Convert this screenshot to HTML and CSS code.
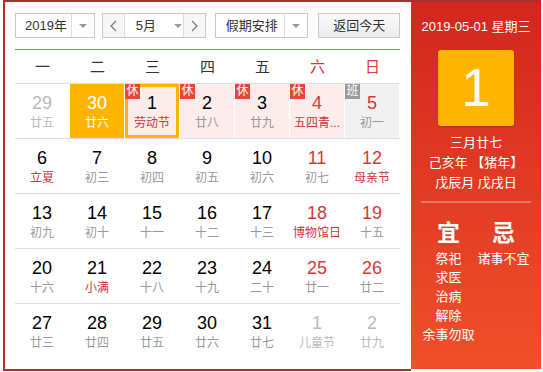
FILE: index.html
```html
<!DOCTYPE html>
<html lang="zh-CN">
<head>
  <meta charset="UTF-8" />
  <title>万年历</title>
  <link rel="stylesheet" href="styles.css">
</head>
<body>
  <div class="calendar">
    <div class="main">
      <!-- toolbar -->
      <div class="toolbar">
        <div class="select year-select">
          <span class="select-text">2019年</span>
          <span class="select-arrow"><i class="caret"></i></span>
        </div>
        <div class="month-group">
          <span class="nav-btn">
            <svg width="7" height="12" viewBox="0 0 7 12"><polyline points="6,1 1,6 6,11" fill="none" stroke="#777" stroke-width="1.2"/></svg>
          </span>
          <span class="month-select">5月<i class="caret"></i></span>
          <span class="nav-btn">
            <svg width="7" height="12" viewBox="0 0 7 12"><polyline points="1,1 6,6 1,11" fill="none" stroke="#777" stroke-width="1.2"/></svg>
          </span>
        </div>
        <div class="select holiday-select">
          <span class="select-text">假期安排</span>
          <span class="select-arrow"><i class="caret"></i></span>
        </div>
        <a class="today-btn">返回今天</a>
      </div>

      <!-- week header -->
      <div class="week-head">
        <span>一</span><span>二</span><span>三</span><span>四</span><span>五</span>
        <span class="weekend">六</span><span class="weekend">日</span>
      </div>

      <!-- days -->
      <div class="days">
        <div class="row">
          <div class="day other"><b>29</b><span>廿五</span></div>
          <div class="day today"><b>30</b><span>廿六</span></div>
          <div class="day holiday selected"><i class="tag">休</i><b>1</b><span class="fest">劳动节</span></div>
          <div class="day holiday"><i class="tag">休</i><b>2</b><span>廿八</span></div>
          <div class="day holiday"><i class="tag">休</i><b>3</b><span>廿九</span></div>
          <div class="day holiday weekend"><i class="tag">休</i><b>4</b><span class="fest">五四青...</span></div>
          <div class="day workday weekend"><i class="tag">班</i><b>5</b><span>初一</span></div>
        </div>
        <div class="row">
          <div class="day"><b>6</b><span class="fest">立夏</span></div>
          <div class="day"><b>7</b><span>初三</span></div>
          <div class="day"><b>8</b><span>初四</span></div>
          <div class="day"><b>9</b><span>初五</span></div>
          <div class="day"><b>10</b><span>初六</span></div>
          <div class="day weekend"><b>11</b><span>初七</span></div>
          <div class="day weekend"><b>12</b><span class="fest">母亲节</span></div>
        </div>
        <div class="row">
          <div class="day"><b>13</b><span>初九</span></div>
          <div class="day"><b>14</b><span>初十</span></div>
          <div class="day"><b>15</b><span>十一</span></div>
          <div class="day"><b>16</b><span>十二</span></div>
          <div class="day"><b>17</b><span>十三</span></div>
          <div class="day weekend"><b>18</b><span class="fest">博物馆日</span></div>
          <div class="day weekend"><b>19</b><span>十五</span></div>
        </div>
        <div class="row">
          <div class="day"><b>20</b><span>十六</span></div>
          <div class="day"><b>21</b><span class="fest">小满</span></div>
          <div class="day"><b>22</b><span>十八</span></div>
          <div class="day"><b>23</b><span>十九</span></div>
          <div class="day"><b>24</b><span>二十</span></div>
          <div class="day weekend"><b>25</b><span>廿一</span></div>
          <div class="day weekend"><b>26</b><span>廿二</span></div>
        </div>
        <div class="row">
          <div class="day"><b>27</b><span>廿三</span></div>
          <div class="day"><b>28</b><span>廿四</span></div>
          <div class="day"><b>29</b><span>廿五</span></div>
          <div class="day"><b>30</b><span>廿六</span></div>
          <div class="day"><b>31</b><span>廿七</span></div>
          <div class="day other"><b>1</b><span>儿童节</span></div>
          <div class="day other"><b>2</b><span>廿九</span></div>
        </div>
      </div>
    </div>

    <!-- side panel -->
    <div class="side">
      <p class="side-date">2019-05-01 星期三</p>
      <div class="big-day">1</div>
      <div class="lunar-info">
        <p>三月廿七</p>
        <p>己亥年 【猪年】</p>
        <p>戊辰月 戊戌日</p>
      </div>
      <div class="yiji">
        <div class="yiji-col">
          <h3>宜</h3>
          <p>祭祀</p>
          <p>求医</p>
          <p>治病</p>
          <p>解除</p>
          <p>余事勿取</p>
        </div>
        <div class="yiji-col">
          <h3>忌</h3>
          <p>诸事不宜</p>
        </div>
      </div>
    </div>
  </div>
</body>
</html>
```

FILE: styles.css
```css
* {
  margin: 0;
  padding: 0;
  box-sizing: border-box;
}

body {
  font-family: "Liberation Sans", "Noto Sans CJK SC", sans-serif;
  background-color: #fff;
  color: #333;
}

.calendar {
  display: flex;
  margin-left: 3px;
  width: 538px;
}

/* left part */
.main {
  width: 408px;
  height: 371px;
  border: 2px solid #a9302c;
  border-right: 0;
  padding: 0 11px 0 10px;
}

.toolbar {
  display: flex;
  align-items: center;
  padding: 11px 0;
  border-bottom: 1px solid #e0604f;
  font-size: 13px;
  line-height: 23px;
  white-space: nowrap;
}

.select {
  display: flex;
  height: 25px;
  border: 1px solid #c8c8c8;
  background-color: #fff;
}

.select-text {
  flex: 1;
  padding-left: 9px;
}

.select-arrow {
  display: flex;
  align-items: center;
  justify-content: center;
  width: 23px;
  border-left: 1px solid #ddd;
}

.caret {
  display: inline-block;
  width: 0;
  height: 0;
  border-left: 4px solid transparent;
  border-right: 4px solid transparent;
  border-top: 4px solid #999;
}

.year-select {
  width: 80px;
}

.month-group {
  display: flex;
  height: 25px;
  margin-left: 7px;
  border: 1px solid #c8c8c8;
}

.nav-btn {
  display: flex;
  align-items: center;
  justify-content: center;
  width: 21px;
  background-color: #f7f7f7;
}

.month-select {
  display: flex;
  align-items: center;
  width: 60px;
  padding-left: 11px;
  border-left: 1px solid #ddd;
  border-right: 1px solid #ddd;
  background-color: #fff;
}

.month-select .caret {
  margin-left: 18px;
}

.holiday-select {
  width: 94px;
  margin-left: 9px;
}

.holiday-select .select-text {
  padding-left: 10px;
}

.today-btn {
  display: block;
  width: 82px;
  height: 25px;
  margin-left: 10px;
  border: 1px solid #c8c8c8;
  background: linear-gradient(#fafafa, #ececec);
  text-align: center;
}

.week-head {
  display: grid;
  grid-template-columns: repeat(7, 55px);
  height: 34px;
  border-bottom: 1px solid #ddd;
  font-size: 15px;
  line-height: 33px;
  text-align: center;
  color: #333;
}

.week-head .weekend {
  color: #d6383a;
}

.row {
  display: grid;
  grid-template-columns: repeat(7, 55px);
  height: 55px;
  border-bottom: 1px solid #ddd;
}

.row:last-child {
  border-bottom: 0;
}

.day {
  position: relative;
  display: flex;
  flex-direction: column;
  align-items: center;
  height: 54px;
  padding-top: 9px;
  border-right: 1px solid #fff;
  text-align: center;
}

.day b {
  font-weight: normal;
  font-size: 18px;
  line-height: 21px;
  color: #000;
}

.day span {
  display: block;
  margin-top: 1px;
  font-size: 12px;
  line-height: 16px;
  color: #999;
  white-space: nowrap;
}

.day.weekend b {
  color: #d6383a;
}

.day span.fest {
  color: #d0343a;
}

.day.other b,
.day.other span {
  color: #bbb;
}

.day.today {
  background-color: #ffb400;
}

.day.today b,
.day.today span {
  color: #fff;
}

.day.holiday {
  background-color: #fdecec;
}

.day.workday {
  background-color: #f1f1f1;
}

.day.selected {
  box-shadow: inset 0 0 0 3px #ffb400;
}

.tag {
  position: absolute;
  top: 0;
  left: 0;
  width: 15px;
  height: 15px;
  background-color: #e8463c;
  color: #fff;
  font-style: normal;
  font-size: 12px;
  line-height: 15px;
  text-align: center;
}

.workday .tag {
  background-color: #9a9a9a;
}

/* right panel */
.side {
  width: 130px;
  height: 369px;
  padding: 15px 10px 0;
  border-top: 2px solid #a9302c;
  background: linear-gradient(#d1271f, #f14f2a);
  color: #fff;
  text-align: center;
}

.side-date {
  font-size: 13px;
  line-height: 20px;
}

.big-day {
  width: 76px;
  height: 76px;
  margin: 13px auto 0;
  border-radius: 3px;
  background-color: #ffb400;
  box-shadow: 0 1px 2px rgba(0, 0, 0, 0.15);
  font-size: 53px;
  line-height: 76px;
}

.lunar-info {
  margin-top: 7px;
  font-size: 13px;
  line-height: 20px;
}

.yiji {
  display: flex;
  margin-top: 8px;
  padding-top: 15px;
  border-top: 2px solid rgba(255, 255, 255, 0.3);
}

.yiji-col {
  width: 55px;
  font-size: 13px;
  line-height: 19px;
  white-space: nowrap;
}

.yiji-col h3 {
  font-size: 23px;
  font-weight: bold;
  line-height: 30px;
  margin-bottom: 1px;
}
```
